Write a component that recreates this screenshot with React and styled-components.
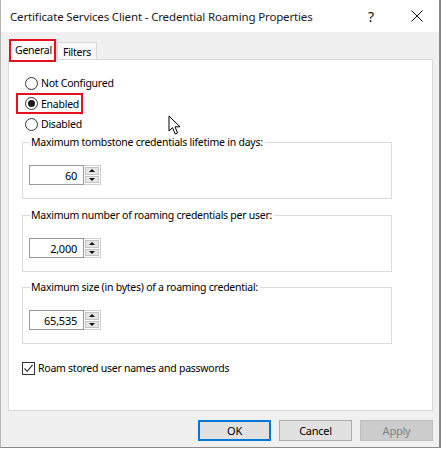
import React from "react";
import styled, { createGlobalStyle } from "styled-components";

const GlobalStyle = createGlobalStyle`
  html, body {
    margin: 0;
    padding: 0;
    background: #ffffff;
  }
  body {
    font-family: "Noto Sans", "Liberation Sans", sans-serif;
    font-size: 10.5px;
    letter-spacing: -0.25px;
    color: #000;
  }
`;

const Window = styled.div`
  position: relative;
  width: 438px;
  height: 447px;
  background: #f0f0f0;
  border-left: 1px solid #b4b4b4;
  border-right: 2px solid #8a8a8a;
  border-bottom: 1px solid #8a8a8a;
  display: flex;
  flex-direction: column;
`;

const TitleBar = styled.div`
  height: 32px;
  background: #ffffff;
  display: flex;
  align-items: center;
  padding-left: 9px;
  flex-shrink: 0;
`;

const Title = styled.div`
  flex: 1;
  font-size: 11.5px;
  letter-spacing: -0.15px;
  color: #1a1a1a;
`;

const TitleButton = styled.div`
  width: ${(p) => p.w}px;
  margin-right: ${(p) => p.mr || 0}px;
  display: flex;
  justify-content: center;
  font-size: ${(p) => p.size}px;
  color: #111;
`;

const Body = styled.div`
  padding: 6px 6px 0 7px;
  display: flex;
  flex-direction: column;
`;

const TabStrip = styled.div`
  display: flex;
  align-items: flex-end;
  height: 21px;
  padding-left: 2px;
  position: relative;
  z-index: 1;
`;

const Tab = styled.div`
  height: ${(p) => (p.active ? 21 : 17)}px;
  padding: 0 ${(p) => (p.active ? 4 : 5)}px;
  background: ${(p) => (p.active ? "#ffffff" : "#f9f9f9")};
  border: 1px solid #d9d9d9;
  border-bottom: ${(p) => (p.active ? "1px solid #ffffff" : "none")};
  margin-bottom: ${(p) => (p.active ? -1 : 0)}px;
  box-sizing: border-box;
  display: flex;
  align-items: center;
  padding-top: ${(p) => (p.active ? 0 : 1)}px;
`;

const Panel = styled.div`
  height: 352px;
  box-sizing: border-box;
  background: #ffffff;
  border: 1px solid #d9d9d9;
  padding: 16px 0 0 13px;
  display: flex;
  flex-direction: column;
`;

const RadioList = styled.div`
  display: flex;
  flex-direction: column;
  gap: 6.5px;
  padding-left: 3px;
  margin-bottom: 4px;
`;

const RadioRow = styled.div`
  display: flex;
  align-items: center;
  height: 14px;
  gap: 3px;
`;

const RadioDot = styled.span`
  width: 13px;
  height: 13px;
  box-sizing: border-box;
  border: 1px solid #333;
  border-radius: 50%;
  background: #fff;
  display: flex;
  align-items: center;
  justify-content: center;
  &::after {
    content: "";
    display: ${(p) => (p.checked ? "block" : "none")};
    width: 7px;
    height: 7px;
    border-radius: 50%;
    background: #1a1a1a;
  }
`;

const Group = styled.fieldset`
  width: 370px;
  height: 64px;
  box-sizing: border-box;
  margin: 0 0 ${(p) => p.gap}px 0;
  padding: 0 0 0 6px;
  border: 1px solid #dcdcdc;
`;

const Legend = styled.legend`
  padding: 0 2px 0 1px;
  margin-left: 1px;
  line-height: 14px;
`;

const Spinner = styled.div`
  display: flex;
  margin-top: 16px;
`;

const NumberBox = styled.div`
  width: 55px;
  height: 20px;
  box-sizing: border-box;
  border: 1px solid #9a9a9a;
  background: #fff;
  display: flex;
  align-items: center;
  justify-content: flex-end;
  padding-right: 6px;
  font-size: 11px;
`;

const SpinButtons = styled.div`
  display: flex;
  flex-direction: column;
  width: 17px;
  height: 20px;
  box-sizing: border-box;
  border: 1px solid #cfcfcf;
  border-left: none;
  padding: 1px;
  gap: 1px;
`;

const SpinButton = styled.div`
  flex: 1;
  background: #e6e6e6;
  border: 1px solid #c4c4c4;
  display: flex;
  align-items: center;
  justify-content: center;
  &::after {
    content: "";
    width: 0;
    height: 0;
    border-left: 3px solid transparent;
    border-right: 3px solid transparent;
    ${(p) =>
      p.down
        ? "border-top: 3px solid #111;"
        : "border-bottom: 3px solid #111;"}
  }
`;

const CheckRow = styled.div`
  display: flex;
  align-items: center;
  gap: 3px;
  margin-top: 8px;
`;

const CheckBox = styled.span`
  width: 13px;
  height: 13px;
  box-sizing: border-box;
  border: 1px solid #333;
  background: #fff;
  display: flex;
  align-items: center;
  justify-content: center;
`;

const ButtonRow = styled.div`
  display: flex;
  justify-content: flex-end;
  gap: 8px;
  padding-top: 9px;
`;

const Button = styled.div`
  width: 73px;
  height: 21px;
  box-sizing: border-box;
  display: flex;
  align-items: center;
  justify-content: center;
  font-size: 11px;
  background: ${(p) => (p.disabled ? "#cccccc" : "#e1e1e1")};
  color: ${(p) => (p.disabled ? "#838383" : "#000")};
  border: 1px solid
    ${(p) => (p.primary ? "#0078d7" : p.disabled ? "#bfbfbf" : "#adadad")};
  box-shadow: ${(p) => (p.primary ? "inset 0 0 0 1px #0078d7" : "none")};
`;

const Highlight = styled.div`
  position: absolute;
  left: ${(p) => p.x}px;
  top: ${(p) => p.y}px;
  width: ${(p) => p.w}px;
  height: ${(p) => p.h}px;
  box-sizing: border-box;
  border: 2px solid #e8111b;
  pointer-events: none;
  z-index: 5;
`;

const Cursor = styled.svg`
  position: absolute;
  left: 167px;
  top: 115px;
  z-index: 6;
`;

function Radio({ checked, children }) {
  return (
    <RadioRow>
      <RadioDot checked={checked} />
      <span>{children}</span>
    </RadioRow>
  );
}

function NumberField({ label, value, gap }) {
  return (
    <Group gap={gap}>
      <Legend>{label}</Legend>
      <Spinner>
        <NumberBox>{value}</NumberBox>
        <SpinButtons>
          <SpinButton />
          <SpinButton down />
        </SpinButtons>
      </Spinner>
    </Group>
  );
}

export default function App() {
  return (
    <>
      <GlobalStyle />
      <Window>
        <TitleBar>
          <Title>Certificate Services Client - Credential Roaming Properties</Title>
          <TitleButton w={14} mr={17} size={14}>?</TitleButton>
          <TitleButton w={44} size={15}>
            <svg width="12" height="12" viewBox="0 0 12 12">
              <path d="M0.5 0.5 L11.5 11.5 M11.5 0.5 L0.5 11.5" stroke="#111" strokeWidth="1" />
            </svg>
          </TitleButton>
        </TitleBar>
        <Body>
          <TabStrip>
            <Tab active>General</Tab>
            <Tab>Filters</Tab>
          </TabStrip>
          <Panel>
            <RadioList>
              <Radio>Not Configured</Radio>
              <Radio checked>Enabled</Radio>
              <Radio>Disabled</Radio>
            </RadioList>
            <NumberField gap={9} label="Maximum tombstone credentials lifetime in days:" value="60" />
            <NumberField gap={8} label="Maximum number of roaming credentials per user:" value="2,000" />
            <NumberField gap={9} label="Maximum size (in bytes) of a roaming credential:" value="65,535" />
            <CheckRow>
              <CheckBox>
                <svg width="11" height="11" viewBox="0 0 11 11">
                  <path d="M1.5 5.5 L4.2 8.3 L9.6 1.8" fill="none" stroke="#222" strokeWidth="1.1" />
                </svg>
              </CheckBox>
              <span>Roam stored user names and passwords</span>
            </CheckRow>
          </Panel>
          <ButtonRow>
            <Button primary>OK</Button>
            <Button>Cancel</Button>
            <Button disabled>Apply</Button>
          </ButtonRow>
        </Body>
        <Highlight x={8} y={39} w={47} h={23} />
        <Highlight x={15} y={93} w={67} h={21} />
        <Cursor width="14" height="21" viewBox="0 0 14 21">
          <path
            d="M1 1 L1 16 L4.5 12.6 L7.2 19 L9.6 18 L7 11.8 L12 11.8 Z"
            fill="#ffffff"
            stroke="#000000"
            strokeWidth="1"
            strokeLinejoin="round"
          />
        </Cursor>
      </Window>
    </>
  );
}
